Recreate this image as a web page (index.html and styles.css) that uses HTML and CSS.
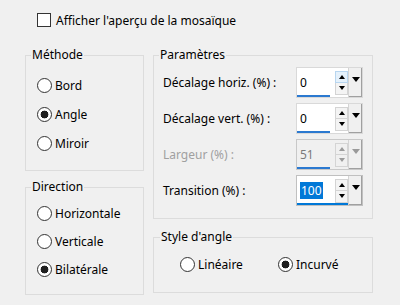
FILE: index.html
```html
<!DOCTYPE html>
<html>
    <head>
        <title>Mosaïque</title>
        <meta charset="UTF-8">
        <link rel="stylesheet" href="styles.css">
    </head>
    <body>
        <label class="preview">
            <input type="checkbox" class="check"/> Afficher l'aperçu de la mosaïque
        </label>
        <div class="groups">
            <div class="col">
                <fieldset class="box methode">
                    <legend>Méthode</legend>
                    <label class="opt"><input type="radio" name="methode"/> Bord</label>
                    <label class="opt"><input type="radio" name="methode" checked/> Angle</label>
                    <label class="opt"><input type="radio" name="methode"/> Miroir</label>
                </fieldset>
                <fieldset class="box direction">
                    <legend>Direction</legend>
                    <label class="opt"><input type="radio" name="direction"/> Horizontale</label>
                    <label class="opt"><input type="radio" name="direction"/> Verticale</label>
                    <label class="opt"><input type="radio" name="direction" checked/> Bilatérale</label>
                </fieldset>
            </div>
            <div class="col">
                <fieldset class="box params">
                    <legend>Paramètres</legend>
                    <div class="field">
                        <span>Décalage horiz. (%) :</span>
                        <div class="spin">
                            <div class="val">0</div>
                            <div class="arrows"><div class="up hover"></div><div class="down"></div></div>
                            <div class="drop"></div>
                        </div>
                    </div>
                    <div class="field">
                        <span>Décalage vert. (%) :</span>
                        <div class="spin">
                            <div class="val">0</div>
                            <div class="arrows"><div class="up"></div><div class="down"></div></div>
                            <div class="drop"></div>
                        </div>
                    </div>
                    <div class="field off">
                        <span>Largeur (%) :</span>
                        <div class="spin">
                            <div class="val">51</div>
                            <div class="arrows"><div class="up"></div><div class="down"></div></div>
                            <div class="drop"></div>
                        </div>
                    </div>
                    <div class="field focus">
                        <span>Transition (%) :</span>
                        <div class="spin">
                            <div class="val"><span class="sel">100</span></div>
                            <div class="arrows"><div class="up"></div><div class="down"></div></div>
                            <div class="drop"></div>
                        </div>
                    </div>
                </fieldset>
                <fieldset class="box style">
                    <legend>Style d'angle</legend>
                    <div class="style-row">
                        <label class="opt"><input type="radio" name="style"/> Linéaire</label>
                        <label class="opt"><input type="radio" name="style" checked/> Incurvé</label>
                    </div>
                </fieldset>
            </div>
        </div>
    </body>
</html>
```

FILE: styles.css
```css
body{
    margin: 0;
    width: 400px;
    height: 305px;
    background-color: #f0f0f0;
    font-family: "Noto Sans", sans-serif;
    font-size: 12px;
    color: #000;
}
.preview{
    display: flex;
    align-items: center;
    gap: 5px;
    height: 14px;
    padding: 13px 0 0 37px;
}
.check{
    appearance: none;
    margin: 0;
    width: 14px;
    height: 14px;
    border: 1px solid #333;
    background-color: white;
    box-sizing: border-box;
}
.groups{
    display: grid;
    grid-template-columns: 119px 220px;
    column-gap: 9px;
    margin: 19px 0 0 25px;
}
.col{
    display: flex;
    flex-direction: column;
}
.box{
    margin: 0;
    padding: 0;
    border: 1px solid #dcdcdc;
    box-sizing: border-box;
    min-width: 0;
}
.box legend{
    margin-left: 5px;
    padding: 0 1px;
    line-height: 18px;
}
.methode{
    height: 125px;
    padding-top: 7px;
}
.methode .opt{
    height: 29px;
    margin-left: 11px;
}
.direction{
    height: 117px;
    margin-top: 7px;
    padding-top: 3px;
}
.direction .opt{
    height: 28px;
    margin-left: 11px;
}
.opt{
    display: flex;
    align-items: center;
    gap: 3px;
}
.opt input{
    appearance: none;
    margin: 0;
    width: 15px;
    height: 15px;
    border: 1px solid #333;
    border-radius: 50%;
    background-color: white;
}
.opt input:checked{
    background: radial-gradient(circle, #1f1f1f 0 3.6px, white 4.2px);
}
.params{
    height: 173px;
}
.field{
    display: grid;
    grid-template-columns: 1fr 67px;
    align-items: center;
    height: 36px;
    margin: 0 9px;
}
.spin{
    display: flex;
    height: 31px;
    border: 1px solid #d9d9d9;
    box-sizing: border-box;
    background-color: white;
}
.val{
    width: 38px;
    padding-left: 3px;
    display: flex;
    align-items: center;
    box-sizing: border-box;
    background: linear-gradient(#2b79d0, #2b79d0) no-repeat left bottom / 33px 2px;
}
.arrows{
    width: 13px;
    padding: 3px 0 2px;
    display: flex;
    flex-direction: column;
}
.up, .down{
    flex: 1;
    border: 1px solid #d4d4d4;
    background-color: #f4f4f4;
    display: flex;
    align-items: center;
    justify-content: center;
}
.down{
    border-top: none;
}
.up::after, .down::after{
    content: "";
    border-left: 3px solid transparent;
    border-right: 3px solid transparent;
}
.up::after{
    border-bottom: 4px solid #000;
}
.down::after{
    border-top: 4px solid #000;
}
.up.hover{
    background-color: #e5f1fb;
    border-color: #b8d6f0;
}
.drop{
    flex: 1;
    background-color: #f0f0f0;
    border-left: 1px solid #d4d4d4;
    box-shadow: inset -1px -1px #a0a0a0;
    display: flex;
    justify-content: center;
    padding-top: 9px;
    box-sizing: border-box;
}
.drop::after{
    content: "";
    height: 0;
    border-left: 4px solid transparent;
    border-right: 4px solid transparent;
    border-top: 5px solid #000;
}
.off{
    color: #a0a0a0;
}
.off .spin{
    background-color: #f0f0f0;
    border-color: #c8c8c8;
}
.off .val{
    color: #7a7a7a;
}
.off .up::after{
    border-bottom-color: #9a9a9a;
}
.off .down::after, .off .drop::after{
    border-top-color: #9a9a9a;
}
.off .up, .off .down{
    background-color: #f0f0f0;
}
.focus .spin{
    border-color: #c0c0c0;
    background: white linear-gradient(#0078d7, #0078d7) no-repeat left bottom / 100% 2px;
}
.focus .val{
    background: none;
}
.sel{
    background-color: #0078d7;
    color: white;
    padding: 0 1px;
    line-height: 17px;
}
.style{
    height: 65px;
    margin-top: 9px;
    padding-top: 4px;
}
.style legend{
    margin-left: 6px;
}
.style-row{
    display: grid;
    grid-template-columns: 98px auto;
    margin-left: 26px;
}
.style-row .opt{
    height: 29px;
}
```
